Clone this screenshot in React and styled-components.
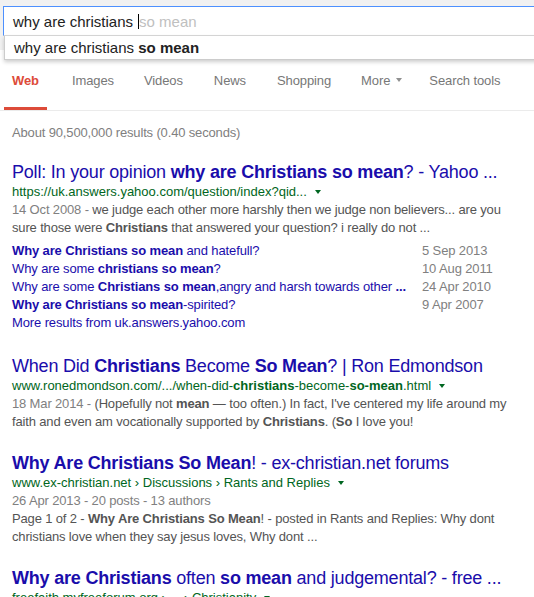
import React from "react";
import styled, { createGlobalStyle } from "styled-components";

const GlobalStyle = createGlobalStyle`
  body {
    margin: 0;
    background: #fff;
    font-family: Arial, "Liberation Sans", sans-serif;
    overflow: hidden;
  }
`;

const Header = styled.div`
  height: 50px;
  background: #f1f1f1;
  padding: 6px 0 0 3px;
  box-sizing: border-box;
`;

const SearchWrap = styled.div`
  position: relative;
  width: 620px;
`;

const SearchInput = styled.div`
  height: 28px;
  background: #fff;
  border-top: 1px solid #4d90fe;
  border-left: 1px solid #4d90fe;
  border-bottom: 1px solid #d9d9d9;
  display: flex;
  align-items: center;
  padding-left: 9px;
  font-size: 15px;
  color: #222;
`;

const Cursor = styled.span`
  display: inline-block;
  width: 1px;
  height: 15px;
  background: #000;
  margin: 0 0 0 5px;
`;

const Hint = styled.span`
  color: #c0c0c0;
`;

const Suggest = styled.div`
  position: absolute;
  top: 100%;
  left: 1px;
  right: 0;
  height: 23px;
  background: #fff;
  border: 1px solid #ccc;
  border-top: none;
  box-shadow: 0 2px 4px rgba(0, 0, 0, 0.2);
  display: flex;
  align-items: center;
  padding-left: 9px;
  font-size: 15px;
  color: #222;
  b {
    font-weight: bold;
  }
`;

const TabBar = styled.div`
  height: 60px;
  display: flex;
  padding-left: 4px;
  border-bottom: 1px solid #ebebeb;
`;

const Tab = styled.div`
  display: flex;
  align-items: center;
  gap: 6px;
  padding: 3px 8px 0;
  margin-right: ${(p) => p.$gap}px;
  border-bottom: 3px solid ${(p) => (p.$active ? "#dd4b39" : "transparent")};
  font-size: 13px;
  letter-spacing: -0.1px;
  font-weight: ${(p) => (p.$active ? "bold" : "normal")};
  color: ${(p) => (p.$active ? "#dd4b39" : "#777")};
`;

const Caret = styled.span`
  width: 0;
  height: 0;
  border-left: 3.5px solid transparent;
  border-right: 3.5px solid transparent;
  border-top: 4px solid ${(p) => p.$color || "#909090"};
  display: inline-block;
`;

const Content = styled.div`
  padding: 13px 0 0 12px;
`;

const Stats = styled.div`
  font-size: 13px;
  line-height: 18px;
  letter-spacing: -0.15px;
  color: #808080;
  margin-bottom: 20px;
`;

const Result = styled.div`
  margin-bottom: ${(p) => p.$gap || 22}px;
`;

const Title = styled.div`
  font-size: 18px;
  line-height: 21px;
  letter-spacing: -0.2px;
  color: #1a0dab;
  white-space: nowrap;
  b {
    font-weight: bold;
  }
`;

const Cite = styled.div`
  font-size: 13px;
  line-height: 18px;
  color: #006621;
  white-space: nowrap;
  display: flex;
  align-items: center;
  gap: 8px;
`;

const Snippet = styled.div`
  font-size: 13px;
  line-height: 18px;
  letter-spacing: -0.15px;
  color: #545454;
  white-space: nowrap;
  b {
    font-weight: bold;
  }
`;

const Dim = styled.span`
  color: #808080;
`;

const Sitelinks = styled.div`
  margin-top: 5px;
  display: grid;
  grid-template-columns: 410px auto;
  font-size: 13px;
  line-height: 18px;
  letter-spacing: -0.12px;
  white-space: nowrap;
`;

const SiteLink = styled.div`
  color: #1a0dab;
  b {
    font-weight: bold;
  }
`;

const SiteDate = styled.div`
  color: #808080;
`;

const tabs = [
  { label: "Web", active: true, gap: 17 },
  { label: "Images", gap: 14 },
  { label: "Videos", gap: 15 },
  { label: "News", gap: 15 },
  { label: "Shopping", gap: 14 },
  { label: "More", caret: true, gap: 11 },
  { label: "Search tools", gap: 0 },
];

const sitelinks = [
  [<><b>Why are Christians so mean</b> and hatefull?</>, "5 Sep 2013"],
  [<>Why are some <b>christians so mean</b>?</>, "10 Aug 2011"],
  [<>Why are some <b>Christians so mean</b>,angry and harsh towards other <b>...</b></>, "24 Apr 2010"],
  [<><b>Why are Christians so mean</b>-spirited?</>, "9 Apr 2007"],
];

export default function App() {
  return (
    <>
      <GlobalStyle />
      <Header>
        <SearchWrap>
          <SearchInput>
            why are christians<Cursor />
            <Hint>so mean</Hint>
          </SearchInput>
          <Suggest>
            why are christians&nbsp;<b>so mean</b>
          </Suggest>
        </SearchWrap>
      </Header>
      <TabBar>
        {tabs.map((t) => (
          <Tab key={t.label} $active={t.active} $gap={t.gap}>
            {t.label}
            {t.caret && <Caret />}
          </Tab>
        ))}
      </TabBar>
      <Content>
        <Stats>About 90,500,000 results (0.40 seconds)</Stats>

        <Result $gap={24}>
          <Title>
            Poll: In your opinion <b>why are Christians so mean</b>? - Yahoo ...
          </Title>
          <Cite>
            https://uk.answers.yahoo.com/question/index?qid...
            <Caret $color="#006621" />
          </Cite>
          <Snippet>
            <Dim>14 Oct 2008 - </Dim>we judge each other more harshly then we judge non believers... are you
          </Snippet>
          <Snippet>
            sure those were <b>Christians</b> that answered your question? i really do not ...
          </Snippet>
          <Sitelinks>
            {sitelinks.map(([link, date], i) => (
              <React.Fragment key={i}>
                <SiteLink>{link}</SiteLink>
                <SiteDate>{date}</SiteDate>
              </React.Fragment>
            ))}
            <SiteLink>More results from uk.answers.yahoo.com</SiteLink>
          </Sitelinks>
        </Result>

        <Result>
          <Title>
            When Did <b>Christians</b> Become <b>So Mean</b>? | Ron Edmondson
          </Title>
          <Cite>
            <span>
              www.ronedmondson.com/.../when-did-<b>christians</b>-become-<b>so-mean</b>.html
            </span>
            <Caret $color="#006621" />
          </Cite>
          <Snippet>
            <Dim>18 Mar 2014 - </Dim>(Hopefully not <b>mean</b> — too often.) In fact, I've centered my life around my
          </Snippet>
          <Snippet>
            faith and even am vocationally supported by <b>Christians</b>. (<b>So</b> I love you!
          </Snippet>
        </Result>

        <Result>
          <Title>
            <b>Why Are Christians So Mean</b>! - ex-christian.net forums
          </Title>
          <Cite>
            www.ex-christian.net › Discussions › Rants and Replies
            <Caret $color="#006621" />
          </Cite>
          <Snippet>
            <Dim>26 Apr 2013 - 20 posts - 13 authors</Dim>
          </Snippet>
          <Snippet>
            Page 1 of 2 - <b>Why Are Christians So Mean</b>! - posted in Rants and Replies: Why dont
          </Snippet>
          <Snippet>christians love when they say jesus loves, Why dont ...</Snippet>
        </Result>

        <Result>
          <Title>
            <b>Why are Christians</b> often <b>so mean</b> and judgemental? - free ...
          </Title>
          <Cite>
            freefaith.myfreeforum.org › ... › Christianity
            <Caret $color="#006621" />
          </Cite>
        </Result>
      </Content>
    </>
  );
}
